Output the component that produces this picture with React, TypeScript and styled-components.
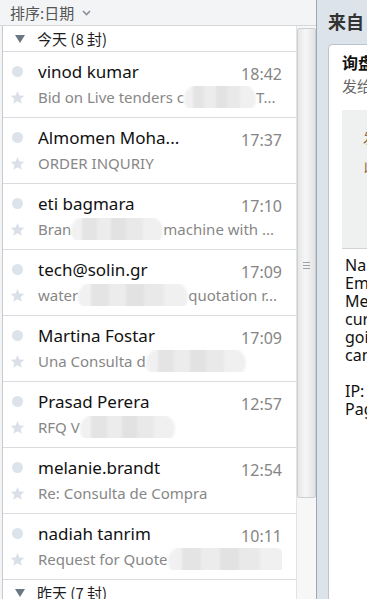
import React from 'react';
import styled, { createGlobalStyle } from 'styled-components';

const GlobalStyle = createGlobalStyle`
  html, body {
    margin: 0;
    padding: 0;
    height: 100%;
    overflow: hidden;
  }
  body {
    font-family: "Noto Sans", "Noto Sans CJK SC", sans-serif;
    background: #fff;
  }
  #root {
    height: 100%;
  }
`;

const Screen = styled.div`
  display: flex;
  width: 367px;
  height: 599px;
  overflow: hidden;
`;

const ListPane = styled.section`
  width: 316px;
  flex: none;
  display: flex;
  flex-direction: column;
  background: #f3f4f5;
  border-right: 1px solid #9ea7b0;
`;

const SortBar = styled.div`
  height: 25px;
  flex: none;
  display: flex;
  align-items: center;
  gap: 8px;
  padding-left: 10px;
  border-bottom: 1px solid #d5d8db;
  font-family: "Noto Sans CJK SC", sans-serif;
  font-size: 15px;
  color: #555;
`;

const ListBody = styled.div`
  flex: 1;
  min-height: 0;
  display: flex;
  margin-left: 2px;
  border-left: 1px solid #c5cad0;
  background: #fff;
`;

const Messages = styled.div`
  flex: 1;
  min-width: 0;
  overflow: hidden;
`;

const GroupHeader = styled.div`
  height: 25px;
  display: flex;
  align-items: center;
  gap: 12px;
  padding-left: 12px;
  border-bottom: 1px solid #dadcde;
  font-family: "Noto Sans CJK SC", sans-serif;
  font-size: 15px;
  color: #1e1e1e;
`;

const Triangle = styled.span`
  width: 0;
  height: 0;
  border-left: 5.5px solid transparent;
  border-right: 5.5px solid transparent;
  border-top: 8px solid #6a7785;
`;

const Row = styled.div`
  display: grid;
  grid-template-columns: 28px 1fr auto;
  grid-template-rows: 23px 22px;
  column-gap: 7px;
  row-gap: 3px;
  align-items: center;
  padding: 8px 14px 0 0;
  box-sizing: border-box;
  height: 66px;
  border-bottom: 1px solid #dadcde;
`;

const Dot = styled.span`
  justify-self: center;
  width: 11px;
  height: 11px;
  border-radius: 50%;
  background: #dde3ea;
`;

const StarIcon = styled.svg`
  justify-self: center;
  width: 15px;
  height: 15px;
  fill: #dae0e7;
`;

const Sender = styled.div`
  font-size: 17px;
  line-height: 22px;
  color: #111;
  white-space: nowrap;
  overflow: hidden;
`;

const Time = styled.div`
  font-size: 16px;
  line-height: 22px;
  color: #858585;
  padding-top: 4px;
`;

const Subject = styled.div`
  grid-column: 2 / 4;
  font-size: 15px;
  line-height: 22px;
  color: #878787;
  white-space: nowrap;
  overflow: hidden;
`;

const Smudge = styled.span<{ $w: number }>`
  display: inline-block;
  width: ${(p) => p.$w}px;
  height: 30px;
  margin: -8px 0;
  vertical-align: middle;
  border-radius: 15px;
  background: linear-gradient(
    90deg,
    #f1f1f1 0 12%,
    #e4e4e4 12% 28%,
    #ececec 28% 44%,
    #e2e2e2 44% 60%,
    #e9e9e9 60% 78%,
    #f0f0f0 78% 100%
  );
  filter: blur(1.2px);
`;

const Scrollbar = styled.div`
  width: 19px;
  flex: none;
  display: flex;
  flex-direction: column;
  padding-top: 2px;
  background: #f7f7f7;
  border-left: 1px solid #e3e3e3;
`;

const Thumb = styled.div`
  height: 470px;
  display: flex;
  align-items: center;
  justify-content: center;
  box-sizing: border-box;
  border: 1px solid #cdd0d3;
  border-radius: 2px;
  background: linear-gradient(90deg, #e6e7e8, #f6f6f6 45%, #e2e3e4);
`;

const Grip = styled.span`
  width: 7px;
  height: 7px;
  margin-top: 4px;
  background: repeating-linear-gradient(180deg, #9aa3ab 0 1px, transparent 1px 3px);
`;

const ReadPane = styled.section`
  flex: 1;
  min-width: 0;
  display: flex;
  flex-direction: column;
  background: #dde3ea;
  padding-left: 11px;
  overflow: hidden;
`;

const PaneTitle = styled.div`
  height: 44px;
  flex: none;
  padding-top: 8px;
  box-sizing: border-box;
  font-family: "Noto Sans CJK SC", sans-serif;
  font-size: 18px;
  font-weight: 700;
  color: #333;
  white-space: nowrap;
`;

const Card = styled.div`
  flex: 1;
  display: flex;
  flex-direction: column;
  background: #fff;
  border: 1px solid #bcc4cc;
  border-right: none;
  border-bottom: none;
  border-radius: 5px 0 0 0;
  white-space: nowrap;
  overflow: hidden;
`;

const CardTitle = styled.div`
  padding: 5px 0 0 13px;
  font-family: "Noto Sans CJK SC", sans-serif;
  font-size: 16px;
  font-weight: 700;
  line-height: 24px;
  color: #111;
`;

const Recipient = styled.div`
  padding-left: 13px;
  font-family: "Noto Sans CJK SC", sans-serif;
  font-size: 15px;
  line-height: 24px;
  color: #666;
`;

const Quote = styled.div`
  height: 139px;
  flex: none;
  margin: 12px 0 0 13px;
  padding-top: 12px;
  box-sizing: border-box;
  background: #eff1f1;
  border-bottom: 1px solid #d0d4d6;
`;

const QuoteLine = styled.div`
  margin-left: 21px;
  font-family: "Noto Sans CJK SC", sans-serif;
  font-size: 14px;
  line-height: 30px;
  color: #9a6a35;
`;

const Body = styled.div`
  padding: 7px 0 0 16px;
  font-size: 16px;
  line-height: 18px;
  color: #111;
`;

const Star = () => (
  <StarIcon viewBox="0 0 24 24">
    <path d="M12 1.5l3.1 7.2 7.8.6-5.9 5.1 1.8 7.6L12 17.9 5.2 22l1.8-7.6L1.1 9.3l7.8-.6z" />
  </StarIcon>
);

interface Mail {
  from: string;
  time: string;
  subject: React.ReactNode;
}

const today: Mail[] = [
  { from: 'vinod kumar', time: '18:42', subject: <>Bid on Live tenders c<Smudge $w={72} />T...</> },
  { from: 'Almomen Moha...', time: '17:37', subject: 'ORDER INQURIY' },
  { from: 'eti bagmara', time: '17:10', subject: <>Bran<Smudge $w={92} />machine with ...</> },
  { from: 'tech@solin.gr', time: '17:09', subject: <>water<Smudge $w={110} />quotation r...</> },
  { from: 'Martina Fostar', time: '17:09', subject: <>Una Consulta d<Smudge $w={100} /></> },
  { from: 'Prasad Perera', time: '12:57', subject: <>RFQ V<Smudge $w={95} /></> },
  { from: 'melanie.brandt', time: '12:54', subject: 'Re: Consulta de Compra' },
  { from: 'nadiah tanrim', time: '10:11', subject: <>Request for Quote<Smudge $w={118} /></> },
];

const bodyLines = [
  'Name: Akash',
  'Email: info@mail.com',
  'Message: Hello,',
  'currently we are',
  'going to buy',
  'can you send',
  '\u00a0',
  'IP: 103.21.4.8',
  'Page: product',
];

export default function App() {
  return (
    <Screen>
      <GlobalStyle />
      <ListPane>
        <SortBar>
          排序:日期
          <svg width="9" height="6" viewBox="0 0 9 6">
            <path d="M1 1l3.5 3.5L8 1" fill="none" stroke="#8a8f94" strokeWidth="1.6" />
          </svg>
        </SortBar>
        <ListBody>
          <Messages>
            <GroupHeader>
              <Triangle />
              今天 (8 封)
            </GroupHeader>
            {today.map((m) => (
              <Row key={m.from + m.time}>
                <Dot />
                <Sender>{m.from}</Sender>
                <Time>{m.time}</Time>
                <Star />
                <Subject>{m.subject}</Subject>
              </Row>
            ))}
            <GroupHeader>
              <Triangle />
              昨天 (7 封)
            </GroupHeader>
          </Messages>
          <Scrollbar>
            <Thumb>
              <Grip />
            </Thumb>
          </Scrollbar>
        </ListBody>
      </ListPane>
      <ReadPane>
        <PaneTitle>来自 阿里巴巴</PaneTitle>
        <Card>
          <CardTitle>询盘 来自买家</CardTitle>
          <Recipient>发给 我</Recipient>
          <Quote>
            <QuoteLine>发件人</QuoteLine>
            <QuoteLine>以下</QuoteLine>
          </Quote>
          <Body>
            {bodyLines.map((l, i) => (
              <div key={i}>{l}</div>
            ))}
          </Body>
        </Card>
      </ReadPane>
    </Screen>
  );
}
